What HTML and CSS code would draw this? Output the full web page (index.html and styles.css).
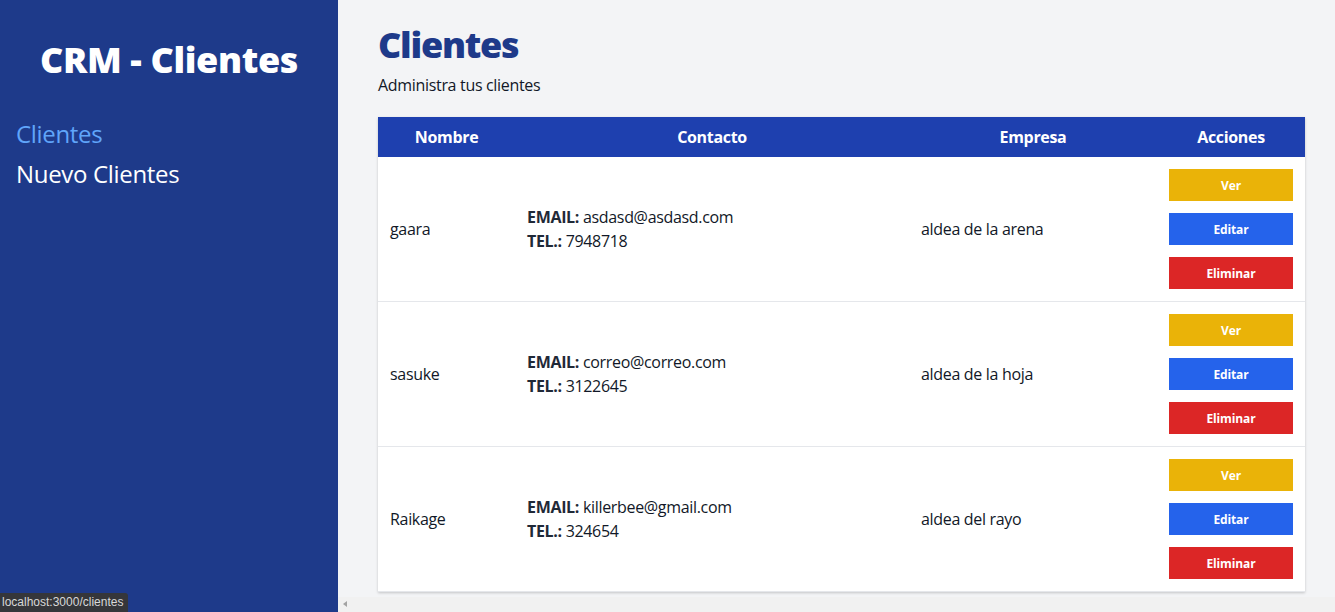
FILE: index.html
```html
<!DOCTYPE html>
<html lang="es">
<head>
<meta charset="utf-8">
<title>CRM - Clientes</title>
<link rel="stylesheet" href="styles.css">
</head>
<body>
<div class="app">
  <aside class="sidebar">
    <h2 class="brand">CRM - Clientes</h2>
    <nav class="nav">
      <a class="nav-link active" href="#">Clientes</a>
      <a class="nav-link" href="#">Nuevo Clientes</a>
    </nav>
  </aside>
  <main class="main">
    <div class="content">
      <h1 class="title">Clientes</h1>
      <p class="subtitle">Administra tus clientes</p>
      <table class="table">
        <thead>
          <tr>
            <th class="col-name">Nombre</th>
            <th class="col-contact">Contacto</th>
            <th class="col-company">Empresa</th>
            <th class="col-actions">Acciones</th>
          </tr>
        </thead>
        <tbody>
          <tr>
            <td>gaara</td>
            <td><p class="line"><span class="label">EMAIL:</span> asdasd@asdasd.com</p><p class="line"><span class="label">TEL.:</span> 7948718</p></td>
            <td>aldea de la arena</td>
            <td class="actions"><button class="btn btn-yellow">Ver</button><button class="btn btn-blue">Editar</button><button class="btn btn-red">Eliminar</button></td>
          </tr>
          <tr>
            <td>sasuke</td>
            <td><p class="line"><span class="label">EMAIL:</span> correo@correo.com</p><p class="line"><span class="label">TEL.:</span> 3122645</p></td>
            <td>aldea de la hoja</td>
            <td class="actions"><button class="btn btn-yellow">Ver</button><button class="btn btn-blue">Editar</button><button class="btn btn-red">Eliminar</button></td>
          </tr>
          <tr>
            <td>Raikage</td>
            <td><p class="line"><span class="label">EMAIL:</span> killerbee@gmail.com</p><p class="line"><span class="label">TEL.:</span> 324654</p></td>
            <td>aldea del rayo</td>
            <td class="actions"><button class="btn btn-yellow">Ver</button><button class="btn btn-blue">Editar</button><button class="btn btn-red">Eliminar</button></td>
          </tr>
        </tbody>
      </table>
    </div>
    <div class="hscroll"><span class="arrow"></span></div>
  </main>
</div>
<div class="status">localhost:3000/clientes</div>
</body>
</html>
```
FILE: styles.css
```css
* { box-sizing: border-box; }
html, body { margin: 0; padding: 0; height: 100%; }
body {
  font-family: "Open Sans", "Noto Sans", sans-serif;
  font-size: 16px;
  line-height: 24px;
  color: #111827;
  overflow: hidden;
  letter-spacing: -0.02em;
}
.app { display: flex; height: 612px; }
.sidebar {
  width: 338px;
  flex: none;
  background: #1e3a8a;
  padding: 40px 20px;
}
.brand {
  margin: 0;
  color: #fff;
  font-size: 36px;
  line-height: 40px;
  font-weight: 900;
  letter-spacing: -0.01em;
  text-align: center;
}
.nav { display: flex; flex-direction: column; margin-top: 38px; margin-left: -4px; gap: 8px; }
.nav-link {
  color: #fff;
  font-size: 24px;
  line-height: 32px;
  text-decoration: none;
}
.nav-link.active { color: #60a5fa; }
.main {
  flex: 1;
  background: #f3f4f6;
  display: flex;
  flex-direction: column;
  min-width: 0;
}
.content { flex: 1; padding: 25px 30px 0 40px; }
.title {
  margin: 0;
  font-size: 36px;
  line-height: 40px;
  font-weight: 900;
  letter-spacing: -0.035em;
  color: #1e3a8a;
}
.subtitle { margin: 8px 0 0; }
.table {
  margin-top: 20px;
  width: 100%;
  border-collapse: collapse;
  background: #fff;
  box-shadow: 0 1px 3px rgba(0,0,0,0.12), 0 1px 2px rgba(0,0,0,0.08);
}
.table th {
  background: #1e40af;
  color: #fff;
  font-weight: 700;
  height: 40px;
  padding: 0 12px;
  text-align: center;
}
.col-name { width: 137px; }
.col-contact { width: 394px; }
.col-company { width: 248px; }
.col-actions { width: 148px; }
.table td {
  padding: 12px;
  vertical-align: middle;
  border-bottom: 1px solid #e5e7eb;
}
.line { margin: 0; }
.label { font-weight: 700; color: #1f2937; }
.btn {
  display: block;
  width: 100%;
  height: 32px;
  border: 0;
  margin: 0 0 12px;
  padding: 0;
  color: #fff;
  font-family: inherit;
  font-size: 12px;
  font-weight: 700;
  letter-spacing: -0.01em;
}
.btn:last-child { margin-bottom: 0; }
.btn-yellow { background: #eab308; }
.btn-blue { background: #2563eb; }
.btn-red { background: #dc2626; }
.hscroll {
  height: 15px;
  flex: none;
  background: #f1f1f1;
  position: relative;
}
.arrow {
  position: absolute;
  left: 5px;
  top: 4px;
  width: 0;
  height: 0;
  border-top: 3px solid transparent;
  border-bottom: 3px solid transparent;
  border-right: 4px solid #a3a3a3;
}
.status {
  position: fixed;
  left: 0;
  bottom: 0;
  height: 19px;
  padding: 0 5px 0 2px;
  background: #35363a;
  color: #d8d8d8;
  font-family: "Liberation Sans", sans-serif;
  font-size: 12px;
  line-height: 19px;
  letter-spacing: 0;
  border-top-right-radius: 3px;
}
```
